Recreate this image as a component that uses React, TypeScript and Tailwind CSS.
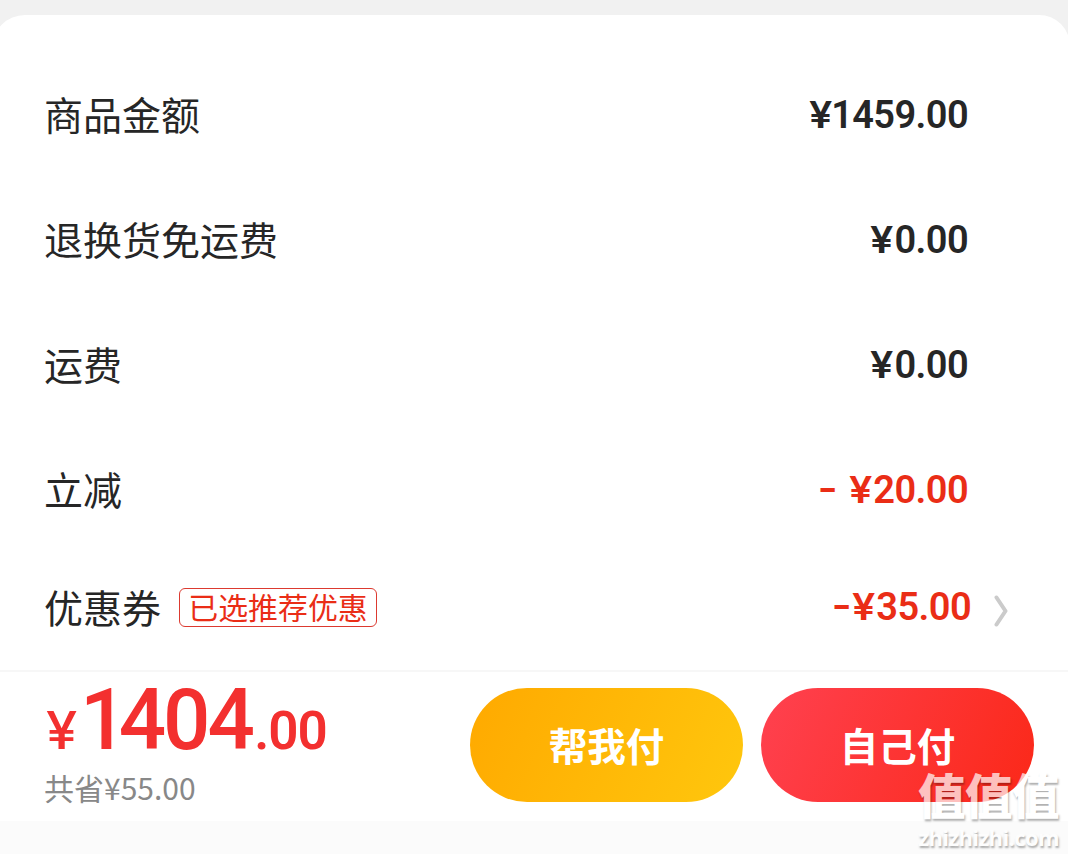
import clsx from 'clsx';

interface FeeRow {
  id: string;
  label: string;
  amount: string;
  discount?: boolean;
}

const rows: FeeRow[] = [
  { id: 'goods', label: '商品金额', amount: '1459.00' },
  { id: 'return', label: '退换货免运费', amount: '0.00' },
  { id: 'shipping', label: '运费', amount: '0.00' },
  { id: 'instant', label: '立减', amount: '20.00', discount: true },
];

const labelClass = "-mt-[2px] font-['Noto_Sans_CJK_SC',sans-serif] text-[39px] leading-[60px] text-[#262626]";
const amountClass = 'flex text-[38px] leading-[60px] font-[570] tracking-[-0.6px] whitespace-pre';

function Minus({ className }: { className: string }) {
  return <span className={clsx('-mt-px inline-block w-[15px] origin-left scale-x-140', className)}>-</span>;
}

// The narrow leading "1" sits closer to the currency sign
function Yen({ tight }: { tight?: boolean }) {
  return (
    <span className={clsx("origin-left scale-x-112 font-['Inter',sans-serif] text-[37px] tracking-normal", tight ? 'w-[22px]' : 'w-[24px]')}>
      ¥
    </span>
  );
}

function Watermark() {
  return (
    <div className="absolute right-[9px] bottom-[3px] flex flex-col items-end text-white opacity-70 [text-shadow:1px_2px_2px_rgba(0,0,0,0.45)]">
      <span className="font-['Noto_Sans_CJK_SC',sans-serif] text-[47.5px] leading-[48px] font-black tracking-[-0.5px]">值值值</span>
      <span className="mt-[5px] font-['Open_Sans',sans-serif] text-[22px] leading-[28px] font-bold tracking-[-0.6px]">zhizhizhi.com</span>
    </div>
  );
}

export default function App() {
  return (
    <div className="relative flex h-[854px] w-[1068px] flex-col overflow-hidden bg-[#f1f1f1] pt-[15px] font-['Roboto','Noto_Sans_CJK_SC',sans-serif]">
      {/* Fee breakdown */}
      <div className="-mr-[2px] -ml-2 h-[655px] shrink-0 rounded-tl-[33px] rounded-tr-[31px] bg-white pt-[70px] pr-[2px] pl-[52px]">
        {rows.map((row) => (
          <div key={row.id} className="flex h-[125px] items-start justify-between pr-[100px]">
            <span className={labelClass}>{row.label}</span>
            <span className={clsx(amountClass, row.discount ? 'text-[#ea2d16]' : 'text-[#262626]')}>
              {row.discount && <Minus className="mr-[16px]" />}
              <Yen tight={row.amount.startsWith('1')} />
              {row.amount}
            </span>
          </div>
        ))}
        <div className="-mt-[8px] flex h-[60px] items-center pr-[60px]">
          <span className={labelClass}>优惠券</span>
          <span className="ml-[18px] flex h-[39px] w-[198px] items-center justify-center rounded-[6px] border border-[#dc3a30] font-['Noto_Sans_CJK_SC',sans-serif] text-[29.9px] leading-none text-[#ea2d16]">
            已选推荐优惠
          </span>
          <span className={clsx(amountClass, 'ml-auto text-[#ea2d16]')}>
            <Minus className="mr-[5px]" />
            <Yen />
            35.00
          </span>
          <svg className="mt-[7px] ml-[23px]" width="14" height="32" viewBox="0 0 14 32" fill="none">
            <path d="M2.5 2.5L11.5 16L2.5 29.5" stroke="#cbcbcb" strokeWidth="4" strokeLinecap="round" strokeLinejoin="round" />
          </svg>
        </div>
      </div>

      {/* Payment bar */}
      <div className="flex h-[151px] shrink-0 border-t-2 border-[#f7f7f7] bg-white pt-4 pl-[45px]">
        <div className="flex w-[425px] flex-col text-[#f3302f]">
          <div className="flex h-[64px] items-baseline font-medium">
            <span className="ml-px w-[34px] origin-left scale-x-108 font-['Inter',sans-serif] text-[52px] leading-[64px]">¥</span>
            <span className="origin-left scale-x-97 text-[86px] leading-[64px] tracking-[-3.1px]">
              <span className="tracking-[-9px]">1</span>404
            </span>
            <span className="-ml-[3px] text-[53px] leading-[64px] font-[560] tracking-[-1px]">.00</span>
          </div>
          <span className="mt-[13px] -ml-px font-['Noto_Sans_CJK_SC',sans-serif] text-[30px] leading-[44px] text-[#888888]">共省¥55.00</span>
        </div>
        <button className="h-[114px] w-[273px] rounded-full bg-linear-[115deg,#ffa900,#ffc70d] font-['Noto_Sans_CJK_SC',sans-serif] text-[38.5px] font-bold text-white">
          帮我付
        </button>
        <button className="ml-[18px] h-[114px] w-[273px] rounded-full bg-linear-[115deg,#ff4150,#fb2818] font-['Noto_Sans_CJK_SC',sans-serif] text-[38.5px] font-bold text-white">
          自己付
        </button>
      </div>
      <div className="h-[33px] shrink-0 bg-[#fbfbfb]" />

      <Watermark />
    </div>
  );
}
